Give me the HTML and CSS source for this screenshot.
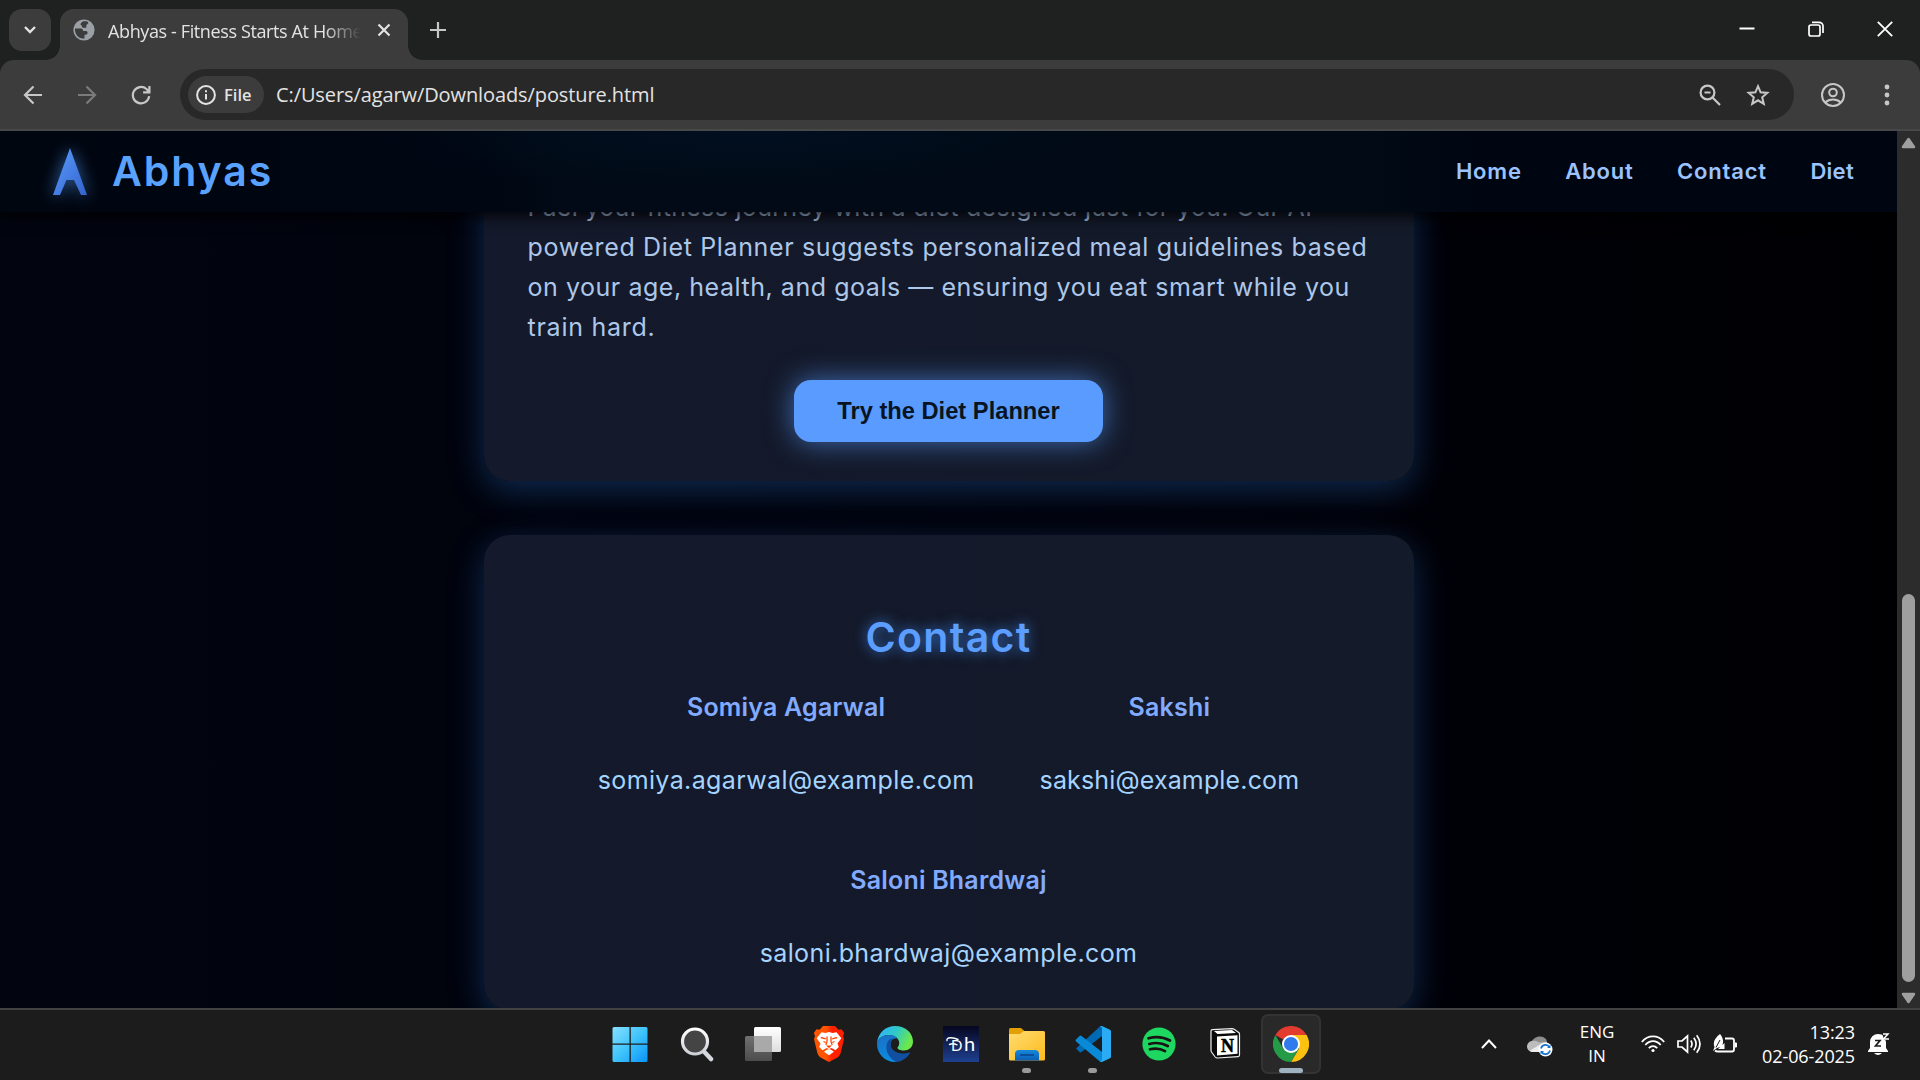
FILE: index.html
```
<!DOCTYPE html>
<html lang="en">
<head>
<meta charset="utf-8">
<title>Abhyas - Fitness Starts At Home</title>
<link rel="stylesheet" href="styles.css">
</head>
<body>
<div class="desktop">
  <div class="tabstrip">
    <div class="tab-search"><svg width="14" height="10" viewBox="0 0 14 10"><path d="M2 2l5 5 5-5" fill="none" stroke="#e3e3e3" stroke-width="2.4"/></svg></div>
    <div class="tab">
      <svg class="globe" width="22" height="22" viewBox="0 0 22 22"><circle cx="11" cy="11" r="10.6" fill="#9aa0a6"/><path d="M2 9.5h5.5c2 0 2.5 1 2.5 2.500h3c1.200 0 1.800 1 1.500 2.200-.4 1.500-1.500 1.600-3 1.600v3.600C6 20.500 1.500 15.500 2 9.500zM10.500 2.300h3c1.700.5 2.500 1.200 1.200 2.500l-1.400 1.400v2.500h-3c-1 0-1.500-.6-1.500-1.700 0-.9-.6-1.200-1.600-1.200C8 4 9 2.800 10.500 2.300z" fill="#3c3c3c"/></svg>
      <span class="tab-title">Abhyas - Fitness Starts At Home</span>
      <svg class="tab-close" width="14" height="14" viewBox="0 0 14 14"><path d="M1.500 1.500l11 11m0-11l-11 11" stroke="#e3e3e3" stroke-width="2.200"/></svg>
    </div>
    <svg class="new-tab" width="18" height="18" viewBox="0 0 18 18"><path d="M9 1v16M1 9h16" stroke="#c7c7c7" stroke-width="2.200"/></svg>
    <div class="window-buttons">
      <svg width="16" height="16" viewBox="0 0 16 16"><path d="M.5 7.500h15" stroke="#fff" stroke-width="2"/></svg>
      <svg width="16" height="16" viewBox="0 0 16 16" fill="none" stroke="#fff" stroke-width="1.700"><rect x="1" y="4" width="11" height="11" rx="2"/><path d="M4 1.300h7a4 4 0 0 1 4 4V12"/></svg>
      <svg width="16" height="16" viewBox="0 0 16 16"><path d="M.8.8l14.400 14.400m0-14.400L.8 15.200" stroke="#fff" stroke-width="1.800"/></svg>
    </div>
  </div>

  <div class="toolbar">
    <div class="nav-buttons">
      <svg width="20" height="20" viewBox="0 0 20 20" fill="none" stroke="#c7c7c7" stroke-width="2.200"><path d="M19 10H2m8.500-8.500L2 10l8.500 8.500"/></svg>
      <svg width="20" height="20" viewBox="0 0 20 20" fill="none" stroke="#7b7b7b" stroke-width="2.200"><path d="M1 10h17M9.500 1.500L18 10l-8.500 8.500"/></svg>
      <svg width="20" height="20" viewBox="0 0 20 20" fill="none" stroke="#c7c7c7" stroke-width="2.200"><path d="M18.200 11.200A8.200 8.200 0 1 1 15.500 4l2.400 2.500M18.400 1v6.300h-6.300"/></svg>
    </div>
    <div class="omnibox">
      <div class="chip"><svg width="20" height="20" viewBox="0 0 20 20"><circle cx="10" cy="10" r="8.900" fill="none" stroke="#e3e3e3" stroke-width="2"/><path d="M10 9v5.500M10 5.200v2.100" stroke="#e3e3e3" stroke-width="2"/></svg><span>File</span></div>
      <span class="url">C:/Users/agarw/Downloads/posture.html</span>
      <svg class="zoom-icon" width="22" height="22" viewBox="0 0 22 22" fill="none" stroke="#c7c7c7" stroke-width="2.200"><circle cx="8.500" cy="8.500" r="6.900"/><path d="M5.500 8.500h6M13.500 13.500l7.500 7.500"/></svg>
      <svg width="24" height="24" viewBox="0 0 24 24" fill="none" stroke="#c7c7c7" stroke-width="2"><path d="M12 3.200l2.600 6.100 6.700.6-5.100 4.400 1.600 6.600L12 17.300l-5.800 3.600 1.600-6.600L2.700 9.900l6.700-.6z"/></svg>
    </div>
    <svg class="profile" width="24" height="24" viewBox="0 0 24 24" fill="none" stroke="#c7c7c7" stroke-width="2"><circle cx="12" cy="12" r="11"/><circle cx="12" cy="9.500" r="3.800"/><path d="M4.300 19.500c4-4 11.400-4 15.400 0"/></svg>
    <svg class="menu" width="6" height="22" viewBox="0 0 6 22" fill="#c7c7c7"><circle cx="3" cy="3" r="2.400"/><circle cx="3" cy="11" r="2.400"/><circle cx="3" cy="19" r="2.400"/></svg>
  </div>

  <div class="viewport">
    <div class="page">
      <header class="site-header">
        <svg class="logo" width="34" height="47" viewBox="0 0 34 47"><defs><linearGradient id="lg" x1="0" y1="0" x2="1" y2="1"><stop offset="0" stop-color="#5b9dff"/><stop offset="1" stop-color="#3363cc"/></linearGradient></defs><path d="M17 0L34 47H28L21 32H13.500L7 47H0z" fill="url(#lg)"/></svg>
        <span class="brand">Abhyas</span>
        <nav class="links"><a class="link-home">Home</a><a class="link-about">About</a><a class="link-contact">Contact</a><a>Diet</a></nav>
      </header>
      <main class="content">
        <section class="card diet">
          <p><span class="line l1">Fuel your fitness journey with a diet designed just for you. Our AI-</span><span class="line l2">powered Diet Planner suggests personalized meal guidelines based</span><span class="line l3">on your age, health, and goals — ensuring you eat smart while you</span><span class="line l4">train hard.</span></p>
          <button class="cta">Try the Diet Planner</button>
        </section>
        <section class="card contact">
          <h2>Contact</h2>
          <div class="people">
            <div class="person"><strong>Somiya Agarwal</strong><span>somiya.agarwal@example.com</span></div>
            <div class="person short"><strong>Sakshi</strong><span>sakshi@example.com</span></div>
            <div class="person"><strong>Saloni Bhardwaj</strong><span>saloni.bhardwaj@example.com</span></div>
          </div>
        </section>
      </main>
    </div>
    <div class="scrollbar">
      <svg width="15" height="12" viewBox="0 0 15 12"><path d="M7.500 2L13 10H2z" fill="#9f9f9f" stroke="#9f9f9f" stroke-width="2.500" stroke-linejoin="round"/></svg>
      <div class="thumb"></div>
      <svg width="15" height="12" viewBox="0 0 15 12"><path d="M7.500 10L13 2H2z" fill="#9f9f9f" stroke="#9f9f9f" stroke-width="2.500" stroke-linejoin="round"/></svg>
    </div>
  </div>

  <div class="taskbar">
    <div class="apps">
      <div class="app start"><svg width="36" height="36" viewBox="0 0 36 36"><defs><linearGradient id="win" x1="0" y1="0" x2="1" y2="1"><stop offset="0" stop-color="#87e0ff"/><stop offset=".5" stop-color="#3fc4fa"/><stop offset="1" stop-color="#0a93fa"/></linearGradient></defs><path d="M2 1h15.500v16.500H.5V2.500Q.5 1 2 1zM18.800 1H34q1.500 0 1.500 1.500v15H18.800zM.5 18.800h17V36H2Q.5 36 .5 34.500zM18.800 18.800h16.700v15.700q0 1.500-1.500 1.500H18.800z" fill="url(#win)"/></svg></div>
      <div class="app"><svg width="36" height="36" viewBox="0 0 36 36"><defs><linearGradient id="sr" x1="0" y1="0" x2="0" y2="1"><stop offset="0" stop-color="#fff"/><stop offset="1" stop-color="#ccd0d6"/></linearGradient></defs><path d="M24 24.500l8 8.500" stroke="#d4d7dd" stroke-width="4.500" stroke-linecap="round"/><circle cx="16" cy="15.500" r="12.500" fill="#444" stroke="url(#sr)" stroke-width="3.200"/></svg></div>
      <div class="app"><svg width="36" height="36" viewBox="0 0 36 36"><defs><linearGradient id="tv" x1="0" y1="0" x2="0" y2="1"><stop offset="0" stop-color="#fff"/><stop offset="1" stop-color="#dedede"/></linearGradient><linearGradient id="tb" x1="0" y1="0" x2="0" y2="1"><stop offset="0" stop-color="#707070"/><stop offset="1" stop-color="#4c4c4c"/></linearGradient></defs><rect y="10" width="27" height="25" rx="1.500" fill="url(#tb)"/><rect x="9" y="1" width="27" height="25" rx="1.500" fill="url(#tv)"/><path d="M9 10h18v16H9z" fill="#a9a9a9"/></svg></div>
      <div class="app"><svg width="36" height="36" viewBox="0 0 36 36"><defs><linearGradient id="br" x1="0" x2="1" y1="0" y2="0"><stop offset=".4" stop-color="#ff5500"/><stop offset=".6" stop-color="#ff2000"/></linearGradient></defs><path d="M12 0h12l3.500 3.700 3-.5 2.700 3.800-1.200 3 1 3-3.500 14.500q-1 2.500-3 4L18 36l-8.500-4.500q-2-1.500-3-4L3 13l1-3L2.800 7l2.700-3.800 3 .5z" fill="url(#br)"/><path d="M10.500 6.300l4 .8L18 6l3.500 1.100 4-.8 4.800 5.900-3.800 5.300 1.300 3.500-3.300 3.200-4-2.200-2.500 1-2.500-1-4 2.200L8.200 21l1.300-3.500-3.800-5.300z" fill="#fff"/><path d="M15.500 24l2.500-1 2.500 1 2.500 1.700-5 3.500-5-3.500z" fill="#fff"/><path d="M9.800 11.500l5 1.400M26.200 11.500l-5 1.400M16 10.500v5.200L14.800 19M20 10.500v5.200l1.200 3.300M12.500 15.500l2.200 1M23.500 15.500l-2.200 1" fill="none" stroke="#ff4a00" stroke-width="1.300"/><path d="M15 19.500h6L18 22.300z" fill="#ff4000"/></svg></div>
      <div class="app"><svg width="36" height="36" viewBox="0 0 36 36"><defs><linearGradient id="e1" x1="0" y1="0" x2="1" y2=".35"><stop offset=".1" stop-color="#2fb5f4"/><stop offset=".55" stop-color="#2fc9c9"/><stop offset="1" stop-color="#6ce84a"/></linearGradient><linearGradient id="e2" x1="0" y1="0" x2=".4" y2="1"><stop offset="0" stop-color="#1b6fc4"/><stop offset="1" stop-color="#0c8ce0"/></linearGradient></defs><path d="M0 17C1 6.500 9 0 18 0c11 0 18 7.500 18 15.500 0 6-4.500 9-9 9-4 0-6.500-1.300-6.500-2.700 0-1 1.700-1.600 1.700-4.800 0-4-4-8-10-8C6 9 1.500 12 0 17z" fill="url(#e1)"/><path d="M0 17C1.500 12 6 9 12 9c3.500 0 6.500 1.300 8.300 3.300-4-.6-6.800 2.500-6.800 6.200C13.500 26 20 31 27 31.500A18 18 0 0 1 18 36C8 36 0 28 0 18z" fill="url(#e2)"/><path d="M12.500 13.500C8 17 8.500 25.500 13 31c2 2.700 4.500 4.500 7.500 4.900 5-.8 9.500-3.900 12.300-8.400.5-.8-.3-1.300-1-1C25 29 14 26.500 13.500 18.500c0-2.800 1.500-5 3.700-5.900-1.700-.3-3.300 0-4.700.9z" fill="#114fa0"/></svg></div>
      <div class="app"><svg width="36" height="36" viewBox="0 0 36 36"><defs><linearGradient id="dh" x1="0" y1="0" x2="0" y2="1"><stop offset="0" stop-color="#06061f"/><stop offset="1" stop-color="#1e4090"/></linearGradient></defs><path d="M0 0h36v36H0z" fill="url(#dh)"/><path d="M4 14.500C3 11 10 11 15 13.500M6.500 18.500c2-1 5-.8 7.500.3" fill="none" stroke="#fff" stroke-width="1.400" stroke-linecap="round"/><text x="8" y="24.500" class="dh-d">D</text><text x="21" y="25" class="dh-h">h</text></svg></div>
      <div class="app"><svg width="36" height="36" viewBox="0 0 36 36"><defs><linearGradient id="fo" x1="0" y1="0" x2="1" y2="1"><stop offset="0" stop-color="#ffdc72"/><stop offset="1" stop-color="#fdbb1c"/></linearGradient><linearGradient id="fb" x1="0" y1="0" x2="0" y2="1"><stop offset="0" stop-color="#1789dc"/><stop offset="1" stop-color="#0c5fb4"/></linearGradient></defs><path d="M0 3.500Q0 2 1.500 2H12l4 3.500L12 9H0z" fill="#e2a006"/><path d="M0 8h11l4-3h19.500Q36 5 36 6.500V33q0 1.500-1.500 1.500h-33Q0 34.500 0 33z" fill="url(#fo)"/><path d="M6 34.500V28q0-4 4-4h16q4 0 4 4v6.500z" fill="url(#fb)"/><path d="M11 29h14" stroke="#0a4a90" stroke-width="1.700"/></svg><i class="dot"></i></div>
      <div class="app"><svg width="36" height="36" viewBox="0 0 36 36"><path d="M1 22.500L4.500 26q1 .8 2 0L27 10V0h-1.500z" fill="#0069b3"/><path d="M1 13.500L4.500 10q1-.8 2 0L27 26v10h-1.500L1 15.500q-1-1 0-2z" fill="#0a8ad6"/><path d="M26 0q.7-.3 1.500.2L35 3.700q1 .5 1 1.500v25.600q0 1-1 1.500L27.500 35.800Q26 36.300 25 35.300q2 0 2-2V2.500q0-2-2-1.700z" fill="#2aabf3"/></svg><i class="dot"></i></div>
      <div class="app"><svg width="36" height="36" viewBox="0 0 36 36"><circle cx="18" cy="18" r="16.600" fill="#1ed760"/><path d="M7.500 12.300c7-2 15-1.300 21.500 2.200M8.300 18c6-1.700 13-1 18.500 2M9 23.300c5.200-1.300 10.500-.8 15 1.800" fill="none" stroke="#191414" stroke-width="2.700" stroke-linecap="round"/></svg></div>
      <div class="app"><svg width="36" height="36" viewBox="0 0 36 36"><path d="M4 5q0-1.200 1.500-1.300L25 2.700q1.500 0 2.500.7l4.500 3.300q.5.500.5 1.500V29q0 1.500-1.500 1.600L10.500 32q-1.500 0-2.300-1L4.500 26Q4 25.300 4 24z" fill="#090909" stroke="#eee" stroke-width="1.200"/><path d="M7 5l18-1 4 3-18.500 1zM10 10.500l20.500-1.200v18.500L10 29.500z" fill="#fff"/><text x="20.500" y="25.500" text-anchor="middle" class="notion-n">N</text></svg></div>
      <div class="app active"><svg width="36" height="36" viewBox="0 0 36 36"><path d="M18 18L2.400 9A18 18 0 0 1 33.600 9z" fill="#e33b2e"/><path d="M18 9h15.600A18 18 0 0 1 18 36l8-13.500z" fill="#fdc20f"/><path d="M2.400 9A18 18 0 0 0 18 36l7.800-13.500L10.200 22.500z" fill="#259a47"/><circle cx="18" cy="18" r="9" fill="#fff"/><circle cx="18" cy="18" r="7.100" fill="#2f7bee"/></svg><i class="dot wide"></i></div>
    </div>
    <div class="tray">
      <svg class="chev" width="18" height="12" viewBox="0 0 18 12"><path d="M2 10l7-7.500 7 7.500" fill="none" stroke="#fff" stroke-width="2"/></svg>
      <svg class="cloud" width="26" height="22" viewBox="0 0 26 22"><path d="M4 8C6 2 14-1 19 4l2 6H4z" fill="#8d8d8d"/><path d="M6 17a5.500 5.500 0 0 1-1-11q4-1 7 1.500l8-.5v10z" fill="#bcbcbc"/><path d="M3 15.500L14 9l7-1v9H6q-2 0-3-1.500z" fill="#ededed"/><circle cx="18.500" cy="14.500" r="7" fill="#fff"/><path d="M14 13.500a4.700 4.700 0 0 1 8.500-1.500M23 15.500a4.700 4.700 0 0 1-8.500 1.500" fill="none" stroke="#1674cf" stroke-width="1.700"/><path d="M23.500 9.500v3.500H20zM13.500 19.500V16H17z" fill="#1674cf"/></svg>
      <div class="lang">ENG<br>IN</div>
      <svg class="wifi" width="24" height="20" viewBox="0 0 24 20" fill="none" stroke="#fff" stroke-width="1.800"><path d="M.8 8C7 .6 17 .6 23.200 8M4.300 11c4.400-5.200 11-5.200 15.400 0M7.800 14.200c2.500-2.800 5.900-2.800 8.400 0"/><circle cx="12" cy="16.500" r="1.600" fill="#fff" stroke="none"/></svg>
      <svg class="volume" width="24" height="20" viewBox="0 0 24 20" fill="none" stroke="#fff" stroke-width="1.700"><path d="M1 7h4l5.500-5v16L5 13H1zM13.800 6.500q2.400 3.500 0 7M16.800 3.800q4.600 6.200 0 12.400M19.700 1.200q6.600 8.800 0 17.600"/></svg>
      <svg class="battery" width="24" height="20" viewBox="0 0 24 20"><path d="M12 4.500h7q2 0 2 2v9q0 2-2 2H5q-2 0-3-1" fill="none" stroke="#fff" stroke-width="1.800"/><path d="M22 8.500h1q1 0 1 1v3q0 1-1 1h-1zM7 0c3.500 4 4 9 1.500 12.500L4 14l-4 3 1.500-4C-.5 8 2 4 7 0zM11.500 9v6H5z" fill="#fff"/><path d="M7 6L3 13.500" stroke="#1c1c1c" stroke-width="1"/></svg>
      <div class="clock">13:23<br>02-06-2025</div>
      <svg class="bell" width="22" height="24" viewBox="0 0 22 24"><path d="M2 16V10a8 8 0 0 1 8-8q4 0 6 2l2 6v6l2 3v1H0v-1z" fill="#fff"/><path d="M6 21h8q-4 4-8 0z" fill="#fff"/><path d="M7 8.500h5l-4.500 5.500H13" fill="none" stroke="#1c1c1c" stroke-width="1.700"/><path d="M14 0h7v8h-5z" fill="#1c1c1c"/><path d="M15 2h5l-4.500 5H21" fill="none" stroke="#fff" stroke-width="1.500"/></svg>
    </div>
  </div>
</div>
</body>
</html>
```
FILE: styles.css
```
* { box-sizing: border-box; }
body { margin: 0; background: #000; }
svg { display: block; flex: none; }

.desktop { width: 1920px; height: 1080px; display: flex; flex-direction: column; overflow: hidden; font-family: "Open Sans", sans-serif; background: #1f2120; }

/* Tab strip */
.tabstrip { height: 60px; flex: none; display: flex; align-items: flex-start; padding: 9px 0 0 9px; }
.tab-search { width: 42px; height: 42px; border-radius: 13px; background: #3c3c3c; display: flex; align-items: center; justify-content: center; }
.tab { position: relative; width: 348px; height: 51px; margin-left: 9px; padding: 0 17px 9px 13px; background: #3c3c3c; border-radius: 14px 14px 0 0; display: flex; align-items: center; }
.tab::before, .tab::after { content: ""; position: absolute; bottom: 0; width: 14px; height: 14px; }
.tab::before { left: -14px; background: radial-gradient(circle at 0 0, transparent 13.5px, #3c3c3c 14px); }
.tab::after { right: -14px; background: radial-gradient(circle at 100% 0, transparent 13.5px, #3c3c3c 14px); }
.tab-title { width: 255px; margin-left: 13px; padding-top: 2px; overflow: hidden; white-space: nowrap; font-size: 18px; line-height: 26px; letter-spacing: -0.38px; color: #e3e3e3; -webkit-mask-image: linear-gradient(90deg, #000 216px, transparent 253px); mask-image: linear-gradient(90deg, #000 216px, transparent 253px); }
.tab-close { margin-left: auto; }
.new-tab { margin: 12px 0 0 21px; }
.window-buttons { margin: 12px 27px 0 auto; display: flex; gap: 53px; }

/* Toolbar */
.toolbar { height: 71px; flex: none; display: flex; align-items: center; padding: 0 30px 0 23px; background: #3c3c3c; border-bottom: 2px solid #484848; border-radius: 14px 14px 0 0; }
.nav-buttons { display: flex; gap: 34px; width: 157px; }
.omnibox { width: 1614px; height: 51px; border-radius: 26px; background: #282828; display: flex; align-items: center; padding: 0 24px 0 8px; }
.chip { width: 76px; height: 37px; border-radius: 19px; background: #3c3c3c; display: flex; align-items: center; gap: 8px; padding-left: 8px; color: #e3e3e3; font-size: 16.5px; font-weight: 600; }
.url { margin-left: 12px; font-size: 20px; letter-spacing: -0.1px; color: #e3e3e3; }
.zoom-icon { margin: 0 25px 0 auto; }
.profile { margin-left: 27px; }
.menu { margin-left: auto; }

/* Web page */
.viewport { height: 877px; flex: none; display: flex; }
.page { width: 1897px; display: flex; flex-direction: column; overflow: hidden; font-family: Inter, sans-serif; background: linear-gradient(90deg, #020510, #01030d 25%, #000107 80%, #000003); }
.site-header { position: relative; z-index: 1; height: 81px; flex: none; display: flex; align-items: center; padding: 0 43px 2px 53px; background: radial-gradient(ellipse 380px 60px at 750px 0, #010f20, rgba(1, 15, 32, 0)), linear-gradient(90deg, #000610, #000612 25%, #010a16 30%, #010a15 72%, #000611 78%); box-shadow: 0 4px 14px rgba(0, 0, 0, .9); }
.logo { overflow: visible; margin-top: 2px; filter: drop-shadow(0 0 8px rgba(80, 155, 255, .65)); }
.brand { margin-left: 25px; font-size: 41px; font-weight: 600; letter-spacing: 1.9px; color: #5aa2ff; }
.links { margin-left: auto; display: flex; gap: 43.5px; font-size: 22px; font-weight: 600; letter-spacing: .3px; color: #9cc3ff; }
.link-home, .link-about { letter-spacing: .8px; }
.link-contact { letter-spacing: .8px; }
.content { flex: 1; min-height: 0; overflow: hidden; display: flex; flex-direction: column; align-items: center; gap: 54px; }
.card { width: 930px; flex: none; border-radius: 26px; background: linear-gradient(90deg, #14192b, #131a29); box-shadow: 0 9px 34px rgba(45, 120, 215, .34); }
.diet { height: 349px; margin-top: -80px; padding: 55px 44px 0; }
.diet p { margin: 0; font-size: 25px; line-height: 40px; color: #adc7e9; }
.line { display: block; white-space: nowrap; }
.l1 { letter-spacing: .31px; }
.l2 { letter-spacing: .65px; }
.l3 { letter-spacing: .54px; }
.l4 { letter-spacing: .75px; }
.cta { display: block; width: 309px; height: 62px; margin: 33px auto 0; padding: 0; border: 0; border-radius: 17px; background: #5a9bff; color: #081422; font: bold 23.7px "Liberation Sans", sans-serif; box-shadow: 0 0 28px rgba(90, 155, 255, .65); }
.contact { height: 475px; padding: 72px 80px 0; display: flex; flex-direction: column; align-items: center; }
.contact h2 { margin: 0 0 20px; font-size: 41px; line-height: 60px; font-weight: 600; letter-spacing: 1.3px; color: #5c9eff; text-shadow: 0 0 13px rgba(70, 145, 255, .75); }
.people { display: flex; flex-wrap: wrap; justify-content: center; gap: 60px 65px; }
.person { display: flex; flex-direction: column; align-items: center; gap: 33px; font-size: 25px; line-height: 40px; letter-spacing: .38px; color: #a5d4ff; }
.person.short { letter-spacing: .15px; }
.person strong { font-weight: 600; letter-spacing: .2px; color: #82abff; }

.scrollbar { width: 23px; background: #2c2c2c; display: flex; flex-direction: column; align-items: center; padding: 6px 0 4px; }
.thumb { width: 13px; height: 388px; margin: auto 0 10px; border-radius: 7px; background: #9f9f9f; }

/* Taskbar */
.taskbar { height: 72px; flex: none; display: flex; background: #1c1c1c; border-top: 2px solid #424242; }
.apps { display: flex; gap: 6px; margin-left: 601px; padding-top: 4px; }
.app { position: relative; width: 60px; height: 60px; border-radius: 7px; display: flex; align-items: center; justify-content: center; }
.app.start { padding-right: 3px; }
.app.active { background: #292929; border: 2px solid #333; }
.dot { position: absolute; left: 25px; bottom: 1px; width: 9px; height: 5px; border-radius: 3px; background: #9a9a9a; }
.dot.wide { left: 16px; bottom: -1px; width: 24px; background: #9fb2c0; }
.dh-d { font: 15px Lato, sans-serif; fill: #fff; }
.dh-h { font: 20px Lato, sans-serif; fill: #fff; }
.notion-n { font: bold 18px "Liberation Serif", serif; fill: #000; stroke: #000; stroke-width: .5px; }
.tray { margin-left: auto; display: flex; align-items: center; padding: 0 30px 3px 0; color: #fff; font-size: 18px; line-height: 24px; }
.chev { margin: 0 29px 0 0; }
.cloud { margin: 4px 26px 0 0; }
.lang { width: 36px; margin-top: 1px; font-size: 17px; text-align: center; }
.wifi { margin: 0 12px 0 26px; }
.volume { margin-right: 12px; }
.battery { margin-right: 20px; }
.clock { width: 98px; text-align: right; letter-spacing: -.1px; }
.bell { margin-left: 13px; }
```
